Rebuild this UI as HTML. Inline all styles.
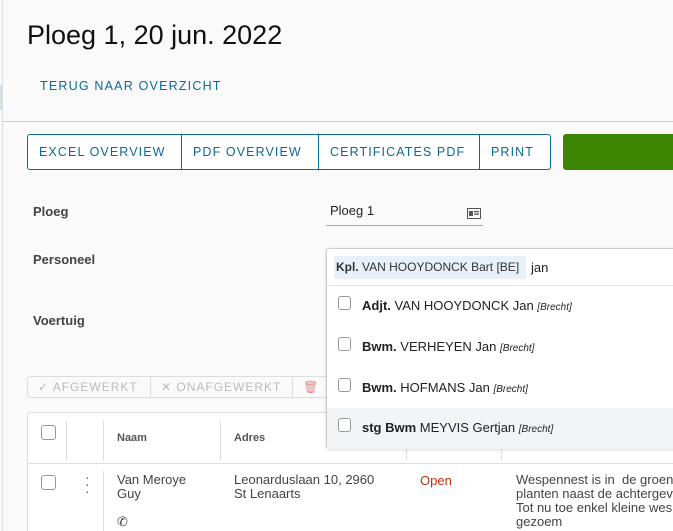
<!DOCTYPE html>
<html><head><style>
*{box-sizing:border-box;margin:0;padding:0}
html,body{width:673px;height:531px;overflow:hidden}
body{background:#fafafa;font-family:"Liberation Sans",sans-serif;position:relative;color:#333}
.abs{position:absolute}
.lb{position:absolute;left:0;top:0;width:3px;height:531px;border-right:1px solid #ddd;background:#fafafa}
h1{position:absolute;left:27px;top:20px;font-size:27px;font-weight:normal;color:#111}
.link{left:40px;top:79px;font-size:12.5px;letter-spacing:1.2px;color:#0a6a99;white-space:nowrap}
.hr{left:3px;top:121px;width:670px;height:1px;background:#ccc}
.bg{left:27px;top:134px;height:36px;border:1px solid #0a6a99;border-radius:3px;display:flex;background:#fff}
.bg div{padding:0 11px;line-height:34px;font-size:12.5px;letter-spacing:1.1px;color:#0a6a99;border-right:1px solid #0a6a99;white-space:nowrap;overflow:hidden}
.bg div:last-child{border-right:none}
.green{left:563px;top:134px;width:120px;height:36px;background:#3b8500;border-radius:3px}
.lab{font-size:13px;font-weight:bold;color:#444}
.sel{left:326px;top:203px;width:157px;height:23px;border-bottom:1px solid #aaa;font-size:13px;padding-left:4px;color:#222}
.toolbar{left:27px;top:376px;height:22px;border:1px solid #ddd;border-radius:3px;display:flex;background:#fafafa}
.toolbar div{padding:0 10px;font-size:12px;letter-spacing:1px;color:#bbb;line-height:20px;border-right:1px solid #ddd;white-space:nowrap;overflow:hidden}
.table{left:27px;top:412px;width:660px;height:140px;border:1px solid #ddd;border-radius:3px;background:#fff}
.cb{position:absolute;width:15px;height:15px;border:1px solid #999;border-radius:3px;background:#fff}
.dd{left:326px;top:248px;width:360px;height:201px;background:#fff;border:1px solid #ccc;border-radius:3px;box-shadow:0 1px 3px rgba(0,0,0,.15)}
.item{position:absolute;left:0;width:100%;height:41px;font-size:13px;color:#222}
.item .cb{left:11px;top:10px;width:13px;height:14px}
.item span.t{position:absolute;left:35px;top:12px;white-space:nowrap}
i{font-size:10px}
</style></head><body>
<div class="lb"></div>
<div class="abs" style="left:0;top:85px;width:3px;height:25px;background:#d8dde2"></div>
<h1>Ploeg 1, 20 jun. 2022</h1>
<div class="abs link">TERUG NAAR OVERZICHT</div>
<div class="abs hr"></div>
<div class="abs bg"><div style="width:154px">EXCEL OVERVIEW</div><div style="width:137px">PDF OVERVIEW</div><div style="width:161px">CERTIFICATES PDF</div><div style="width:70px">PRINT</div></div>
<div class="abs green"></div>
<div class="abs lab" style="left:33px;top:204px">Ploeg</div>
<div class="abs sel">Ploeg 1<svg style="position:absolute;right:2px;top:5px" width="14" height="11" viewBox="0 0 14 11"><rect x="0.5" y="0.5" width="13" height="10" fill="none" stroke="#555"/><rect x="2" y="3" width="4" height="5" fill="#555"/><rect x="7" y="3" width="5" height="1.3" fill="#555"/><rect x="7" y="5.5" width="5" height="1.3" fill="#555"/></svg></div>
<div class="abs lab" style="left:33px;top:252px">Personeel</div>
<div class="abs lab" style="left:33px;top:313px">Voertuig</div>
<div class="abs toolbar"><div style="width:123px">✓ AFGEWERKT</div><div style="width:142px">✕ ONAFGEWERKT</div><div style="width:40px;color:#e88">🗑</div></div>
<div class="abs table">
<div class="cb" style="left:13px;top:12px"></div>
<div class="abs" style="left:38px;top:8px;width:1px;height:40px;background:#ddd"></div>
<div class="abs" style="left:75px;top:8px;width:1px;height:40px;background:#ddd"></div>
<div class="abs" style="left:192px;top:8px;width:1px;height:40px;background:#ddd"></div>
<div class="abs" style="left:378px;top:8px;width:1px;height:40px;background:#ddd"></div>
<div class="abs" style="left:473px;top:8px;width:1px;height:40px;background:#ddd"></div>
<div class="abs" style="left:89px;top:19px;font-size:11px;font-weight:bold;color:#555">Naam</div>
<div class="abs" style="left:206px;top:19px;font-size:11px;font-weight:bold;color:#555">Adres</div>
<div class="abs" style="left:0;top:50px;width:100%;height:1px;background:#ddd"></div>
<div class="cb" style="left:13px;top:62px"></div>
<div class="abs" style="left:57px;top:61px;font-size:14px;color:#666;line-height:7px">·<br>·<br>·</div>
<div class="abs" style="left:75px;top:58px;width:1px;height:80px;background:#ddd"></div>
<div class="abs" style="left:89px;top:60px;font-size:13px;line-height:14px;color:#444">Van Meroye<br>Guy<br><br>✆</div>
<div class="abs" style="left:206px;top:60px;font-size:13px;line-height:14px;color:#444;white-space:nowrap">Leonarduslaan 10, 2960<br>St Lenaarts</div>
<div class="abs" style="left:392px;top:60px;font-size:13px;color:#c0320a">Open</div>
<div class="abs" style="left:488px;top:60px;font-size:13px;line-height:14px;color:#444;white-space:nowrap"> Wespennest is in &nbsp;de groene<br>planten naast de achtergevel<br>Tot nu toe enkel kleine wespen<br>gezoem</div>
</div>
<div class="abs dd">
<div class="abs" style="left:7px;top:7px;height:23px;width:192px;background:#e8f1fa;font-size:12px;line-height:23px;padding-left:2px;color:#333;white-space:nowrap"><b>Kpl.</b> VAN HOOYDONCK Bart [BE]</div>
<div class="abs" style="left:204px;top:11px;font-size:13px;color:#222">jan</div>
<div class="abs" style="left:0;top:36px;width:100%;height:1px;background:#e4e4e4"></div>
<div class="item" style="top:37px"><div class="cb"></div><span class="t"><b>Adjt.</b> VAN HOOYDONCK Jan <i>[Brecht]</i></span></div>
<div class="item" style="top:78px"><div class="cb"></div><span class="t"><b>Bwm.</b> VERHEYEN Jan <i>[Brecht]</i></span></div>
<div class="item" style="top:119px"><div class="cb"></div><span class="t"><b>Bwm.</b> HOFMANS Jan <i>[Brecht]</i></span></div>
<div class="item" style="top:159px;background:#f2f5f8"><div class="cb"></div><span class="t"><b>stg Bwm</b> MEYVIS Gertjan <i>[Brecht]</i></span></div>
</div>
</body></html>
